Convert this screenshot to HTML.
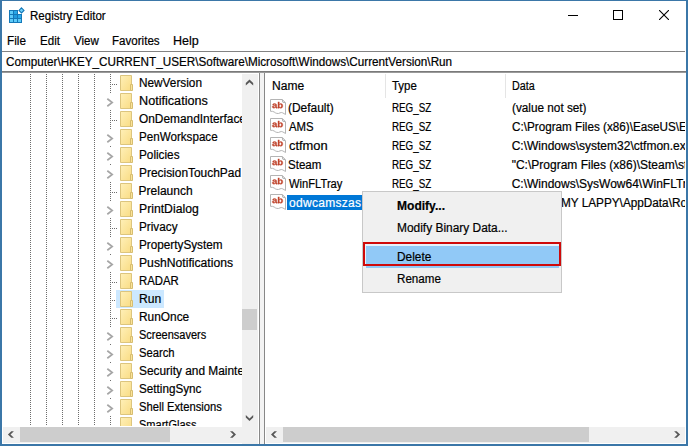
<!DOCTYPE html><html><head><meta charset="utf-8"><style>
*{margin:0;padding:0;box-sizing:border-box}
body{width:688px;height:446px;overflow:hidden;background:#fff;font-family:"Liberation Sans",sans-serif;font-size:12px;line-height:14px;color:#000;position:relative}
.a{position:absolute;white-space:nowrap;transform-origin:0 0;-webkit-text-stroke:0.2px currentColor}
.bl{position:absolute;background:#3b77a8}
.dv{position:absolute;width:1px;background-image:linear-gradient(#6d6d6d 50%,transparent 50%);background-size:1px 2px}
.dh{position:absolute;height:1px;background-image:linear-gradient(90deg,#6d6d6d 50%,transparent 50%);background-size:2px 1px}
</style></head><body>

<div class="bl" style="left:0;top:0;width:688px;height:1px"></div>
<div class="bl" style="left:0;top:0;width:2px;height:446px"></div>
<div class="bl" style="left:686px;top:0;width:2px;height:446px"></div>
<div class="bl" style="left:0;top:444px;width:688px;height:2px"></div>
<svg class="a" style="left:8px;top:6px" width="18" height="18" viewBox="0 0 18 18"><path d="M1 4H10V8H14V17H1Z" fill="#1478b8"/><rect x="2" y="5" width="3" height="3" fill="#5ccaf8"/><rect x="6" y="5" width="3" height="3" fill="#27a6e6"/><rect x="2" y="9" width="3" height="3" fill="#5ccaf8"/><rect x="6" y="9" width="3" height="3" fill="#1f9ade"/><rect x="10" y="9" width="3" height="3" fill="#2aa8e8"/><rect x="2" y="13" width="3" height="3" fill="#5ccaf8"/><rect x="6" y="13" width="3" height="3" fill="#5ccaf8"/><rect x="10" y="13" width="3" height="3" fill="#5ccaf8"/><path d="M13.5 1.9L16 4.4L13.5 6.9L11 4.4Z" fill="#6fd0f8" stroke="#1478b8" stroke-width="1.1"/></svg>
<div class="a" style="left:29.94px;top:9px;transform:scaleX(0.9615);">Registry Editor</div>
<div class="a" style="left:568px;top:15px;width:10px;height:1px;background:#000"></div>
<div class="a" style="left:613px;top:10px;width:10px;height:10px;border:1px solid #000"></div>
<svg class="a" style="left:659px;top:10px" width="10" height="10"><path d="M0 0L10 10M10 0L0 10" stroke="#000" stroke-width="1.1"/></svg>
<div class="a" style="left:7.42px;top:34px;transform:scaleX(0.9778);">File</div>
<div class="a" style="left:39.53px;top:34px;transform:scaleX(0.9650);">Edit</div>
<div class="a" style="left:74.00px;top:34px;transform:scaleX(0.9615);">View</div>
<div class="a" style="left:112.44px;top:34px;transform:scaleX(0.9646);">Favorites</div>
<div class="a" style="left:173.46px;top:34px;transform:scaleX(1.0435);">Help</div>
<div class="a" style="left:2px;top:51px;width:683px;height:1px;background:#828282"></div>
<div class="a" style="left:5.60px;top:55px;transform:scaleX(0.9751);">Computer\HKEY_CURRENT_USER\Software\Microsoft\Windows\CurrentVersion\Run</div>
<div class="a" style="left:2px;top:71px;width:684px;height:1px;background:#7a7a7a"></div>
<div class="a" style="left:2px;top:72px;width:684px;height:1px;background:#9a9a9a"></div>
<div class="a" style="left:0;top:73px;width:242px;height:353px;overflow:hidden">
<div class="dv" style="left:30px;top:1px;height:360px"></div>
<div class="dv" style="left:46px;top:1px;height:360px"></div>
<div class="dv" style="left:62px;top:1px;height:360px"></div>
<div class="dv" style="left:78px;top:1px;height:360px"></div>
<div class="dv" style="left:94px;top:1px;height:360px"></div>
<div class="dv" style="left:110px;top:1px;height:360px"></div>
<div class="dh" style="left:112px;top:11px;width:6px"></div>
<div class="a" style="left:120px;top:2px;width:14px;height:16px"><svg width="14" height="16" viewBox="0 0 14 16"><defs><linearGradient id="fg" x1="0" y1="0" x2="1" y2="1"><stop offset="0" stop-color="#fff0b8"/><stop offset="1" stop-color="#f9dc84"/></linearGradient></defs><path d="M0.5 0.5H11.5V15.5H0.5Z" fill="url(#fg)" stroke="#dcc57e"/><path d="M10.5 9.5H12.5V15.5H10.5Z" fill="#fbe39a" stroke="#d6bd70"/></svg></div>
<div class="a" style="left:138.62px;top:3px;transform:scaleX(0.9839);">NewVersion</div>
<div class="a" style="left:104px;top:20px;width:12px;height:16px;background:#fff"></div>
<svg class="a" style="left:106px;top:25px" width="9" height="11"><path d="M1.3 0.8L6.2 4.5L1.3 8.2" fill="none" stroke="#a6a6a6" stroke-width="1.7"/></svg>
<div class="a" style="left:120px;top:20px;width:14px;height:16px"><svg width="14" height="16" viewBox="0 0 14 16"><defs><linearGradient id="fg" x1="0" y1="0" x2="1" y2="1"><stop offset="0" stop-color="#fff0b8"/><stop offset="1" stop-color="#f9dc84"/></linearGradient></defs><path d="M0.5 0.5H11.5V15.5H0.5Z" fill="url(#fg)" stroke="#dcc57e"/><path d="M10.5 9.5H12.5V15.5H10.5Z" fill="#fbe39a" stroke="#d6bd70"/></svg></div>
<div class="a" style="left:138.55px;top:21px;transform:scaleX(1.0531);">Notifications</div>
<div class="dh" style="left:112px;top:47px;width:6px"></div>
<div class="a" style="left:120px;top:38px;width:14px;height:16px"><svg width="14" height="16" viewBox="0 0 14 16"><defs><linearGradient id="fg" x1="0" y1="0" x2="1" y2="1"><stop offset="0" stop-color="#fff0b8"/><stop offset="1" stop-color="#f9dc84"/></linearGradient></defs><path d="M0.5 0.5H11.5V15.5H0.5Z" fill="url(#fg)" stroke="#dcc57e"/><path d="M10.5 9.5H12.5V15.5H10.5Z" fill="#fbe39a" stroke="#d6bd70"/></svg></div>
<div class="a" style="left:138.60px;top:39px;transform:scaleX(0.9900);">OnDemandInterfaces</div>
<div class="a" style="left:104px;top:56px;width:12px;height:16px;background:#fff"></div>
<svg class="a" style="left:106px;top:61px" width="9" height="11"><path d="M1.3 0.8L6.2 4.5L1.3 8.2" fill="none" stroke="#a6a6a6" stroke-width="1.7"/></svg>
<div class="a" style="left:120px;top:56px;width:14px;height:16px"><svg width="14" height="16" viewBox="0 0 14 16"><defs><linearGradient id="fg" x1="0" y1="0" x2="1" y2="1"><stop offset="0" stop-color="#fff0b8"/><stop offset="1" stop-color="#f9dc84"/></linearGradient></defs><path d="M0.5 0.5H11.5V15.5H0.5Z" fill="url(#fg)" stroke="#dcc57e"/><path d="M10.5 9.5H12.5V15.5H10.5Z" fill="#fbe39a" stroke="#d6bd70"/></svg></div>
<div class="a" style="left:138.63px;top:57px;transform:scaleX(0.9688);">PenWorkspace</div>
<div class="a" style="left:104px;top:74px;width:12px;height:16px;background:#fff"></div>
<svg class="a" style="left:106px;top:79px" width="9" height="11"><path d="M1.3 0.8L6.2 4.5L1.3 8.2" fill="none" stroke="#a6a6a6" stroke-width="1.7"/></svg>
<div class="a" style="left:120px;top:74px;width:14px;height:16px"><svg width="14" height="16" viewBox="0 0 14 16"><defs><linearGradient id="fg" x1="0" y1="0" x2="1" y2="1"><stop offset="0" stop-color="#fff0b8"/><stop offset="1" stop-color="#f9dc84"/></linearGradient></defs><path d="M0.5 0.5H11.5V15.5H0.5Z" fill="url(#fg)" stroke="#dcc57e"/><path d="M10.5 9.5H12.5V15.5H10.5Z" fill="#fbe39a" stroke="#d6bd70"/></svg></div>
<div class="a" style="left:138.62px;top:75px;transform:scaleX(0.9800);">Policies</div>
<div class="a" style="left:104px;top:92px;width:12px;height:16px;background:#fff"></div>
<svg class="a" style="left:106px;top:97px" width="9" height="11"><path d="M1.3 0.8L6.2 4.5L1.3 8.2" fill="none" stroke="#a6a6a6" stroke-width="1.7"/></svg>
<div class="a" style="left:120px;top:92px;width:14px;height:16px"><svg width="14" height="16" viewBox="0 0 14 16"><defs><linearGradient id="fg" x1="0" y1="0" x2="1" y2="1"><stop offset="0" stop-color="#fff0b8"/><stop offset="1" stop-color="#f9dc84"/></linearGradient></defs><path d="M0.5 0.5H11.5V15.5H0.5Z" fill="url(#fg)" stroke="#dcc57e"/><path d="M10.5 9.5H12.5V15.5H10.5Z" fill="#fbe39a" stroke="#d6bd70"/></svg></div>
<div class="a" style="left:138.61px;top:93px;transform:scaleX(0.9931);">PrecisionTouchPad</div>
<div class="dh" style="left:112px;top:119px;width:6px"></div>
<div class="a" style="left:120px;top:110px;width:14px;height:16px"><svg width="14" height="16" viewBox="0 0 14 16"><defs><linearGradient id="fg" x1="0" y1="0" x2="1" y2="1"><stop offset="0" stop-color="#fff0b8"/><stop offset="1" stop-color="#f9dc84"/></linearGradient></defs><path d="M0.5 0.5H11.5V15.5H0.5Z" fill="url(#fg)" stroke="#dcc57e"/><path d="M10.5 9.5H12.5V15.5H10.5Z" fill="#fbe39a" stroke="#d6bd70"/></svg></div>
<div class="a" style="left:138.60px;top:111px;">Prelaunch</div>
<div class="a" style="left:104px;top:128px;width:12px;height:16px;background:#fff"></div>
<svg class="a" style="left:106px;top:133px" width="9" height="11"><path d="M1.3 0.8L6.2 4.5L1.3 8.2" fill="none" stroke="#a6a6a6" stroke-width="1.7"/></svg>
<div class="a" style="left:120px;top:128px;width:14px;height:16px"><svg width="14" height="16" viewBox="0 0 14 16"><defs><linearGradient id="fg" x1="0" y1="0" x2="1" y2="1"><stop offset="0" stop-color="#fff0b8"/><stop offset="1" stop-color="#f9dc84"/></linearGradient></defs><path d="M0.5 0.5H11.5V15.5H0.5Z" fill="url(#fg)" stroke="#dcc57e"/><path d="M10.5 9.5H12.5V15.5H10.5Z" fill="#fbe39a" stroke="#d6bd70"/></svg></div>
<div class="a" style="left:138.58px;top:129px;transform:scaleX(1.0175);">PrintDialog</div>
<div class="dh" style="left:112px;top:155px;width:6px"></div>
<div class="a" style="left:120px;top:146px;width:14px;height:16px"><svg width="14" height="16" viewBox="0 0 14 16"><defs><linearGradient id="fg" x1="0" y1="0" x2="1" y2="1"><stop offset="0" stop-color="#fff0b8"/><stop offset="1" stop-color="#f9dc84"/></linearGradient></defs><path d="M0.5 0.5H11.5V15.5H0.5Z" fill="url(#fg)" stroke="#dcc57e"/><path d="M10.5 9.5H12.5V15.5H10.5Z" fill="#fbe39a" stroke="#d6bd70"/></svg></div>
<div class="a" style="left:138.62px;top:147px;transform:scaleX(0.9789);">Privacy</div>
<div class="a" style="left:104px;top:164px;width:12px;height:16px;background:#fff"></div>
<svg class="a" style="left:106px;top:169px" width="9" height="11"><path d="M1.3 0.8L6.2 4.5L1.3 8.2" fill="none" stroke="#a6a6a6" stroke-width="1.7"/></svg>
<div class="a" style="left:120px;top:164px;width:14px;height:16px"><svg width="14" height="16" viewBox="0 0 14 16"><defs><linearGradient id="fg" x1="0" y1="0" x2="1" y2="1"><stop offset="0" stop-color="#fff0b8"/><stop offset="1" stop-color="#f9dc84"/></linearGradient></defs><path d="M0.5 0.5H11.5V15.5H0.5Z" fill="url(#fg)" stroke="#dcc57e"/><path d="M10.5 9.5H12.5V15.5H10.5Z" fill="#fbe39a" stroke="#d6bd70"/></svg></div>
<div class="a" style="left:138.62px;top:165px;transform:scaleX(0.9786);">PropertySystem</div>
<div class="a" style="left:104px;top:182px;width:12px;height:16px;background:#fff"></div>
<svg class="a" style="left:106px;top:187px" width="9" height="11"><path d="M1.3 0.8L6.2 4.5L1.3 8.2" fill="none" stroke="#a6a6a6" stroke-width="1.7"/></svg>
<div class="a" style="left:120px;top:182px;width:14px;height:16px"><svg width="14" height="16" viewBox="0 0 14 16"><defs><linearGradient id="fg" x1="0" y1="0" x2="1" y2="1"><stop offset="0" stop-color="#fff0b8"/><stop offset="1" stop-color="#f9dc84"/></linearGradient></defs><path d="M0.5 0.5H11.5V15.5H0.5Z" fill="url(#fg)" stroke="#dcc57e"/><path d="M10.5 9.5H12.5V15.5H10.5Z" fill="#fbe39a" stroke="#d6bd70"/></svg></div>
<div class="a" style="left:138.59px;top:183px;transform:scaleX(1.0141);">PushNotifications</div>
<div class="dh" style="left:112px;top:209px;width:6px"></div>
<div class="a" style="left:120px;top:200px;width:14px;height:16px"><svg width="14" height="16" viewBox="0 0 14 16"><defs><linearGradient id="fg" x1="0" y1="0" x2="1" y2="1"><stop offset="0" stop-color="#fff0b8"/><stop offset="1" stop-color="#f9dc84"/></linearGradient></defs><path d="M0.5 0.5H11.5V15.5H0.5Z" fill="url(#fg)" stroke="#dcc57e"/><path d="M10.5 9.5H12.5V15.5H10.5Z" fill="#fbe39a" stroke="#d6bd70"/></svg></div>
<div class="a" style="left:138.66px;top:201px;transform:scaleX(0.9450);">RADAR</div>
<div class="dh" style="left:112px;top:227px;width:6px"></div>
<div class="a" style="left:116px;top:217px;width:48px;height:18px;background:#cce8ff"></div>
<div class="a" style="left:120px;top:218px;width:14px;height:16px"><svg width="14" height="16" viewBox="0 0 14 16"><defs><linearGradient id="fg" x1="0" y1="0" x2="1" y2="1"><stop offset="0" stop-color="#fff0b8"/><stop offset="1" stop-color="#f9dc84"/></linearGradient></defs><path d="M0.5 0.5H11.5V15.5H0.5Z" fill="url(#fg)" stroke="#dcc57e"/><path d="M10.5 9.5H12.5V15.5H10.5Z" fill="#fbe39a" stroke="#d6bd70"/></svg></div>
<div class="a" style="left:138.59px;top:219px;transform:scaleX(1.0100);">Run</div>
<div class="dh" style="left:112px;top:245px;width:6px"></div>
<div class="a" style="left:120px;top:236px;width:14px;height:16px"><svg width="14" height="16" viewBox="0 0 14 16"><defs><linearGradient id="fg" x1="0" y1="0" x2="1" y2="1"><stop offset="0" stop-color="#fff0b8"/><stop offset="1" stop-color="#f9dc84"/></linearGradient></defs><path d="M0.5 0.5H11.5V15.5H0.5Z" fill="url(#fg)" stroke="#dcc57e"/><path d="M10.5 9.5H12.5V15.5H10.5Z" fill="#fbe39a" stroke="#d6bd70"/></svg></div>
<div class="a" style="left:138.61px;top:237px;transform:scaleX(0.9898);">RunOnce</div>
<div class="a" style="left:104px;top:254px;width:12px;height:16px;background:#fff"></div>
<svg class="a" style="left:106px;top:259px" width="9" height="11"><path d="M1.3 0.8L6.2 4.5L1.3 8.2" fill="none" stroke="#a6a6a6" stroke-width="1.7"/></svg>
<div class="a" style="left:120px;top:254px;width:14px;height:16px"><svg width="14" height="16" viewBox="0 0 14 16"><defs><linearGradient id="fg" x1="0" y1="0" x2="1" y2="1"><stop offset="0" stop-color="#fff0b8"/><stop offset="1" stop-color="#f9dc84"/></linearGradient></defs><path d="M0.5 0.5H11.5V15.5H0.5Z" fill="url(#fg)" stroke="#dcc57e"/><path d="M10.5 9.5H12.5V15.5H10.5Z" fill="#fbe39a" stroke="#d6bd70"/></svg></div>
<div class="a" style="left:138.68px;top:255px;transform:scaleX(0.9167);">Screensavers</div>
<div class="a" style="left:104px;top:272px;width:12px;height:16px;background:#fff"></div>
<svg class="a" style="left:106px;top:277px" width="9" height="11"><path d="M1.3 0.8L6.2 4.5L1.3 8.2" fill="none" stroke="#a6a6a6" stroke-width="1.7"/></svg>
<div class="a" style="left:120px;top:272px;width:14px;height:16px"><svg width="14" height="16" viewBox="0 0 14 16"><defs><linearGradient id="fg" x1="0" y1="0" x2="1" y2="1"><stop offset="0" stop-color="#fff0b8"/><stop offset="1" stop-color="#f9dc84"/></linearGradient></defs><path d="M0.5 0.5H11.5V15.5H0.5Z" fill="url(#fg)" stroke="#dcc57e"/><path d="M10.5 9.5H12.5V15.5H10.5Z" fill="#fbe39a" stroke="#d6bd70"/></svg></div>
<div class="a" style="left:138.66px;top:273px;transform:scaleX(0.9361);">Search</div>
<div class="a" style="left:104px;top:290px;width:12px;height:16px;background:#fff"></div>
<svg class="a" style="left:106px;top:295px" width="9" height="11"><path d="M1.3 0.8L6.2 4.5L1.3 8.2" fill="none" stroke="#a6a6a6" stroke-width="1.7"/></svg>
<div class="a" style="left:120px;top:290px;width:14px;height:16px"><svg width="14" height="16" viewBox="0 0 14 16"><defs><linearGradient id="fg" x1="0" y1="0" x2="1" y2="1"><stop offset="0" stop-color="#fff0b8"/><stop offset="1" stop-color="#f9dc84"/></linearGradient></defs><path d="M0.5 0.5H11.5V15.5H0.5Z" fill="url(#fg)" stroke="#dcc57e"/><path d="M10.5 9.5H12.5V15.5H10.5Z" fill="#fbe39a" stroke="#d6bd70"/></svg></div>
<div class="a" style="left:138.60px;top:291px;transform:scaleX(0.9900);">Security and Maintenance</div>
<div class="a" style="left:104px;top:308px;width:12px;height:16px;background:#fff"></div>
<svg class="a" style="left:106px;top:313px" width="9" height="11"><path d="M1.3 0.8L6.2 4.5L1.3 8.2" fill="none" stroke="#a6a6a6" stroke-width="1.7"/></svg>
<div class="a" style="left:120px;top:308px;width:14px;height:16px"><svg width="14" height="16" viewBox="0 0 14 16"><defs><linearGradient id="fg" x1="0" y1="0" x2="1" y2="1"><stop offset="0" stop-color="#fff0b8"/><stop offset="1" stop-color="#f9dc84"/></linearGradient></defs><path d="M0.5 0.5H11.5V15.5H0.5Z" fill="url(#fg)" stroke="#dcc57e"/><path d="M10.5 9.5H12.5V15.5H10.5Z" fill="#fbe39a" stroke="#d6bd70"/></svg></div>
<div class="a" style="left:138.63px;top:309px;transform:scaleX(0.9746);">SettingSync</div>
<div class="a" style="left:104px;top:326px;width:12px;height:16px;background:#fff"></div>
<svg class="a" style="left:106px;top:331px" width="9" height="11"><path d="M1.3 0.8L6.2 4.5L1.3 8.2" fill="none" stroke="#a6a6a6" stroke-width="1.7"/></svg>
<div class="a" style="left:120px;top:326px;width:14px;height:16px"><svg width="14" height="16" viewBox="0 0 14 16"><defs><linearGradient id="fg" x1="0" y1="0" x2="1" y2="1"><stop offset="0" stop-color="#fff0b8"/><stop offset="1" stop-color="#f9dc84"/></linearGradient></defs><path d="M0.5 0.5H11.5V15.5H0.5Z" fill="url(#fg)" stroke="#dcc57e"/><path d="M10.5 9.5H12.5V15.5H10.5Z" fill="#fbe39a" stroke="#d6bd70"/></svg></div>
<div class="a" style="left:138.67px;top:327px;transform:scaleX(0.9341);">Shell Extensions</div>
<div class="dh" style="left:112px;top:353px;width:6px"></div>
<div class="a" style="left:120px;top:344px;width:14px;height:16px"><svg width="14" height="16" viewBox="0 0 14 16"><defs><linearGradient id="fg" x1="0" y1="0" x2="1" y2="1"><stop offset="0" stop-color="#fff0b8"/><stop offset="1" stop-color="#f9dc84"/></linearGradient></defs><path d="M0.5 0.5H11.5V15.5H0.5Z" fill="url(#fg)" stroke="#dcc57e"/><path d="M10.5 9.5H12.5V15.5H10.5Z" fill="#fbe39a" stroke="#d6bd70"/></svg></div>
<div class="a" style="left:138.68px;top:345px;transform:scaleX(0.9194);">SmartGlass</div>
</div>
<div class="a" style="left:242px;top:74px;width:16px;height:370px;background:#f0f0f0"></div>
<div class="a" style="left:242px;top:309px;width:15px;height:21px;background:#cdcdcd"></div>
<div class="a" style="left:3px;top:427px;width:239px;height:16px;background:#f0f0f0"></div>
<div class="a" style="left:20px;top:427px;width:150px;height:15px;background:#cdcdcd"></div>
<div class="a" style="left:258px;top:73px;width:1px;height:354px;background:#fff"></div>
<div class="a" style="left:259px;top:73px;width:1px;height:371px;background:#888"></div>
<div class="a" style="left:260px;top:73px;width:4px;height:371px;background:#f3f3f3"></div>
<div class="a" style="left:264px;top:73px;width:1px;height:371px;background:#888"></div>
<div class="a" style="left:265px;top:73px;width:421px;height:354px;overflow:hidden">
</div>
<div class="a" style="left:385px;top:74px;width:1px;height:24px;background:#e5e5e5"></div>
<div class="a" style="left:505px;top:74px;width:1px;height:24px;background:#e5e5e5"></div>
<div class="a" style="left:271.80px;top:79px;transform:scaleX(1.0032);">Name</div>
<div class="a" style="left:392.40px;top:79px;transform:scaleX(0.9538);">Type</div>
<div class="a" style="left:511.90px;top:79px;transform:scaleX(0.8960);">Data</div>
<div class="a" style="left:270px;top:99px;width:16px;height:16px"><svg width="16" height="16" viewBox="0 0 16 16"><path d="M0.5 0.5H12.3L15.5 3.7V15.5Q14 14.6 12.8 13.9Q11.2 13.1 10 13.9Q8.6 14.8 6.8 14.4Q5.2 14 4.2 13Q2.8 12.1 0.5 12.3Z" fill="#fff" stroke="#b4b4b4"/><path d="M12.3 0.8L12.8 3.2L15.2 3.7" fill="none" stroke="#9a9a9a" stroke-width="0.8"/><path transform="translate(2.0 9.15) scale(0.00467 0.0042)" d="M393 20Q236 20 148.0 -65.5Q60 -151 60 -306Q60 -474 169.5 -562.0Q279 -650 487 -652L720 -656V-711Q720 -817 683.0 -868.5Q646 -920 562 -920Q484 -920 447.5 -884.5Q411 -849 402 -767L109 -781Q136 -939 253.5 -1020.5Q371 -1102 574 -1102Q779 -1102 890.0 -1001.0Q1001 -900 1001 -714V-320Q1001 -229 1021.5 -194.5Q1042 -160 1090 -160Q1122 -160 1152 -166V-14Q1127 -8 1107.0 -3.0Q1087 2 1067.0 5.0Q1047 8 1024.5 10.0Q1002 12 972 12Q866 12 815.5 -40.0Q765 -92 755 -193H749Q631 20 393 20ZM720 -501 576 -499Q478 -495 437.0 -477.5Q396 -460 374.5 -424.0Q353 -388 353 -328Q353 -251 388.5 -213.5Q424 -176 483 -176Q549 -176 603.5 -212.0Q658 -248 689.0 -311.5Q720 -375 720 -446Z M2306 -545Q2306 -277 2198.5 -128.5Q2091 20 1891 20Q1776 20 1692.0 -30.0Q1608 -80 1563 -174H1561Q1561 -139 1556.5 -78.0Q1552 -17 1547 0H1274Q1282 -93 1282 -247V-1484H1563V-1070L1559 -894H1563Q1658 -1102 1909 -1102Q2101 -1102 2203.5 -956.5Q2306 -811 2306 -545ZM2013 -545Q2013 -729 1959.0 -818.0Q1905 -907 1792 -907Q1678 -907 1618.5 -811.5Q1559 -716 1559 -536Q1559 -364 1617.5 -268.0Q1676 -172 1790 -172Q2013 -172 2013 -545Z" fill="#c0432b" stroke="#c0432b" stroke-width="0.35" vector-effect="non-scaling-stroke"/></svg></div>
<div class="a" style="left:287.60px;top:101px;transform:scaleX(0.9956);">(Default)</div>
<div class="a" style="left:391.78px;top:101px;transform:scaleX(0.8170);">REG_SZ</div>
<div class="a" style="left:265px;top:99px;width:420px;height:19px;overflow:hidden"><div class="a" style="left:246.72px;top:2px;transform:scaleX(0.9800);">(value not set)</div></div>
<div class="a" style="left:270px;top:118px;width:16px;height:16px"><svg width="16" height="16" viewBox="0 0 16 16"><path d="M0.5 0.5H12.3L15.5 3.7V15.5Q14 14.6 12.8 13.9Q11.2 13.1 10 13.9Q8.6 14.8 6.8 14.4Q5.2 14 4.2 13Q2.8 12.1 0.5 12.3Z" fill="#fff" stroke="#b4b4b4"/><path d="M12.3 0.8L12.8 3.2L15.2 3.7" fill="none" stroke="#9a9a9a" stroke-width="0.8"/><path transform="translate(2.0 9.15) scale(0.00467 0.0042)" d="M393 20Q236 20 148.0 -65.5Q60 -151 60 -306Q60 -474 169.5 -562.0Q279 -650 487 -652L720 -656V-711Q720 -817 683.0 -868.5Q646 -920 562 -920Q484 -920 447.5 -884.5Q411 -849 402 -767L109 -781Q136 -939 253.5 -1020.5Q371 -1102 574 -1102Q779 -1102 890.0 -1001.0Q1001 -900 1001 -714V-320Q1001 -229 1021.5 -194.5Q1042 -160 1090 -160Q1122 -160 1152 -166V-14Q1127 -8 1107.0 -3.0Q1087 2 1067.0 5.0Q1047 8 1024.5 10.0Q1002 12 972 12Q866 12 815.5 -40.0Q765 -92 755 -193H749Q631 20 393 20ZM720 -501 576 -499Q478 -495 437.0 -477.5Q396 -460 374.5 -424.0Q353 -388 353 -328Q353 -251 388.5 -213.5Q424 -176 483 -176Q549 -176 603.5 -212.0Q658 -248 689.0 -311.5Q720 -375 720 -446Z M2306 -545Q2306 -277 2198.5 -128.5Q2091 20 1891 20Q1776 20 1692.0 -30.0Q1608 -80 1563 -174H1561Q1561 -139 1556.5 -78.0Q1552 -17 1547 0H1274Q1282 -93 1282 -247V-1484H1563V-1070L1559 -894H1563Q1658 -1102 1909 -1102Q2101 -1102 2203.5 -956.5Q2306 -811 2306 -545ZM2013 -545Q2013 -729 1959.0 -818.0Q1905 -907 1792 -907Q1678 -907 1618.5 -811.5Q1559 -716 1559 -536Q1559 -364 1617.5 -268.0Q1676 -172 1790 -172Q2013 -172 2013 -545Z" fill="#c0432b" stroke="#c0432b" stroke-width="0.35" vector-effect="non-scaling-stroke"/></svg></div>
<div class="a" style="left:288.60px;top:120px;transform:scaleX(0.9462);">AMS</div>
<div class="a" style="left:391.78px;top:120px;transform:scaleX(0.8170);">REG_SZ</div>
<div class="a" style="left:265px;top:118px;width:420px;height:19px;overflow:hidden"><div class="a" style="left:246.70px;top:2px;transform:scaleX(0.9750);">C:\Program Files (x86)\EaseUS\EaseUS Todo Backup</div></div>
<div class="a" style="left:270px;top:137px;width:16px;height:16px"><svg width="16" height="16" viewBox="0 0 16 16"><path d="M0.5 0.5H12.3L15.5 3.7V15.5Q14 14.6 12.8 13.9Q11.2 13.1 10 13.9Q8.6 14.8 6.8 14.4Q5.2 14 4.2 13Q2.8 12.1 0.5 12.3Z" fill="#fff" stroke="#b4b4b4"/><path d="M12.3 0.8L12.8 3.2L15.2 3.7" fill="none" stroke="#9a9a9a" stroke-width="0.8"/><path transform="translate(2.0 9.15) scale(0.00467 0.0042)" d="M393 20Q236 20 148.0 -65.5Q60 -151 60 -306Q60 -474 169.5 -562.0Q279 -650 487 -652L720 -656V-711Q720 -817 683.0 -868.5Q646 -920 562 -920Q484 -920 447.5 -884.5Q411 -849 402 -767L109 -781Q136 -939 253.5 -1020.5Q371 -1102 574 -1102Q779 -1102 890.0 -1001.0Q1001 -900 1001 -714V-320Q1001 -229 1021.5 -194.5Q1042 -160 1090 -160Q1122 -160 1152 -166V-14Q1127 -8 1107.0 -3.0Q1087 2 1067.0 5.0Q1047 8 1024.5 10.0Q1002 12 972 12Q866 12 815.5 -40.0Q765 -92 755 -193H749Q631 20 393 20ZM720 -501 576 -499Q478 -495 437.0 -477.5Q396 -460 374.5 -424.0Q353 -388 353 -328Q353 -251 388.5 -213.5Q424 -176 483 -176Q549 -176 603.5 -212.0Q658 -248 689.0 -311.5Q720 -375 720 -446Z M2306 -545Q2306 -277 2198.5 -128.5Q2091 20 1891 20Q1776 20 1692.0 -30.0Q1608 -80 1563 -174H1561Q1561 -139 1556.5 -78.0Q1552 -17 1547 0H1274Q1282 -93 1282 -247V-1484H1563V-1070L1559 -894H1563Q1658 -1102 1909 -1102Q2101 -1102 2203.5 -956.5Q2306 -811 2306 -545ZM2013 -545Q2013 -729 1959.0 -818.0Q1905 -907 1792 -907Q1678 -907 1618.5 -811.5Q1559 -716 1559 -536Q1559 -364 1617.5 -268.0Q1676 -172 1790 -172Q2013 -172 2013 -545Z" fill="#c0432b" stroke="#c0432b" stroke-width="0.35" vector-effect="non-scaling-stroke"/></svg></div>
<div class="a" style="left:288.60px;top:139px;transform:scaleX(1.0743);">ctfmon</div>
<div class="a" style="left:391.78px;top:139px;transform:scaleX(0.8170);">REG_SZ</div>
<div class="a" style="left:265px;top:137px;width:420px;height:19px;overflow:hidden"><div class="a" style="left:246.70px;top:2px;">C:\Windows\system32\ctfmon.exe</div></div>
<div class="a" style="left:270px;top:156px;width:16px;height:16px"><svg width="16" height="16" viewBox="0 0 16 16"><path d="M0.5 0.5H12.3L15.5 3.7V15.5Q14 14.6 12.8 13.9Q11.2 13.1 10 13.9Q8.6 14.8 6.8 14.4Q5.2 14 4.2 13Q2.8 12.1 0.5 12.3Z" fill="#fff" stroke="#b4b4b4"/><path d="M12.3 0.8L12.8 3.2L15.2 3.7" fill="none" stroke="#9a9a9a" stroke-width="0.8"/><path transform="translate(2.0 9.15) scale(0.00467 0.0042)" d="M393 20Q236 20 148.0 -65.5Q60 -151 60 -306Q60 -474 169.5 -562.0Q279 -650 487 -652L720 -656V-711Q720 -817 683.0 -868.5Q646 -920 562 -920Q484 -920 447.5 -884.5Q411 -849 402 -767L109 -781Q136 -939 253.5 -1020.5Q371 -1102 574 -1102Q779 -1102 890.0 -1001.0Q1001 -900 1001 -714V-320Q1001 -229 1021.5 -194.5Q1042 -160 1090 -160Q1122 -160 1152 -166V-14Q1127 -8 1107.0 -3.0Q1087 2 1067.0 5.0Q1047 8 1024.5 10.0Q1002 12 972 12Q866 12 815.5 -40.0Q765 -92 755 -193H749Q631 20 393 20ZM720 -501 576 -499Q478 -495 437.0 -477.5Q396 -460 374.5 -424.0Q353 -388 353 -328Q353 -251 388.5 -213.5Q424 -176 483 -176Q549 -176 603.5 -212.0Q658 -248 689.0 -311.5Q720 -375 720 -446Z M2306 -545Q2306 -277 2198.5 -128.5Q2091 20 1891 20Q1776 20 1692.0 -30.0Q1608 -80 1563 -174H1561Q1561 -139 1556.5 -78.0Q1552 -17 1547 0H1274Q1282 -93 1282 -247V-1484H1563V-1070L1559 -894H1563Q1658 -1102 1909 -1102Q2101 -1102 2203.5 -956.5Q2306 -811 2306 -545ZM2013 -545Q2013 -729 1959.0 -818.0Q1905 -907 1792 -907Q1678 -907 1618.5 -811.5Q1559 -716 1559 -536Q1559 -364 1617.5 -268.0Q1676 -172 1790 -172Q2013 -172 2013 -545Z" fill="#c0432b" stroke="#c0432b" stroke-width="0.35" vector-effect="non-scaling-stroke"/></svg></div>
<div class="a" style="left:287.64px;top:158px;transform:scaleX(0.9636);">Steam</div>
<div class="a" style="left:391.78px;top:158px;transform:scaleX(0.8170);">REG_SZ</div>
<div class="a" style="left:265px;top:156px;width:420px;height:19px;overflow:hidden"><div class="a" style="left:246.70px;top:2px;">&quot;C:\Program Files (x86)\Steam\steam.exe&quot; -silent</div></div>
<div class="a" style="left:270px;top:175px;width:16px;height:16px"><svg width="16" height="16" viewBox="0 0 16 16"><path d="M0.5 0.5H12.3L15.5 3.7V15.5Q14 14.6 12.8 13.9Q11.2 13.1 10 13.9Q8.6 14.8 6.8 14.4Q5.2 14 4.2 13Q2.8 12.1 0.5 12.3Z" fill="#fff" stroke="#b4b4b4"/><path d="M12.3 0.8L12.8 3.2L15.2 3.7" fill="none" stroke="#9a9a9a" stroke-width="0.8"/><path transform="translate(2.0 9.15) scale(0.00467 0.0042)" d="M393 20Q236 20 148.0 -65.5Q60 -151 60 -306Q60 -474 169.5 -562.0Q279 -650 487 -652L720 -656V-711Q720 -817 683.0 -868.5Q646 -920 562 -920Q484 -920 447.5 -884.5Q411 -849 402 -767L109 -781Q136 -939 253.5 -1020.5Q371 -1102 574 -1102Q779 -1102 890.0 -1001.0Q1001 -900 1001 -714V-320Q1001 -229 1021.5 -194.5Q1042 -160 1090 -160Q1122 -160 1152 -166V-14Q1127 -8 1107.0 -3.0Q1087 2 1067.0 5.0Q1047 8 1024.5 10.0Q1002 12 972 12Q866 12 815.5 -40.0Q765 -92 755 -193H749Q631 20 393 20ZM720 -501 576 -499Q478 -495 437.0 -477.5Q396 -460 374.5 -424.0Q353 -388 353 -328Q353 -251 388.5 -213.5Q424 -176 483 -176Q549 -176 603.5 -212.0Q658 -248 689.0 -311.5Q720 -375 720 -446Z M2306 -545Q2306 -277 2198.5 -128.5Q2091 20 1891 20Q1776 20 1692.0 -30.0Q1608 -80 1563 -174H1561Q1561 -139 1556.5 -78.0Q1552 -17 1547 0H1274Q1282 -93 1282 -247V-1484H1563V-1070L1559 -894H1563Q1658 -1102 1909 -1102Q2101 -1102 2203.5 -956.5Q2306 -811 2306 -545ZM2013 -545Q2013 -729 1959.0 -818.0Q1905 -907 1792 -907Q1678 -907 1618.5 -811.5Q1559 -716 1559 -536Q1559 -364 1617.5 -268.0Q1676 -172 1790 -172Q2013 -172 2013 -545Z" fill="#c0432b" stroke="#c0432b" stroke-width="0.35" vector-effect="non-scaling-stroke"/></svg></div>
<div class="a" style="left:288.60px;top:177px;transform:scaleX(0.9316);">WinFLTray</div>
<div class="a" style="left:391.78px;top:177px;transform:scaleX(0.8170);">REG_SZ</div>
<div class="a" style="left:265px;top:175px;width:420px;height:19px;overflow:hidden"><div class="a" style="left:246.70px;top:2px;">C:\Windows\SysWow64\WinFLTray.exe</div></div>
<div class="a" style="left:270px;top:194px;width:16px;height:16px"><svg width="16" height="16" viewBox="0 0 16 16"><path d="M0.5 0.5H12.3L15.5 3.7V15.5Q14 14.6 12.8 13.9Q11.2 13.1 10 13.9Q8.6 14.8 6.8 14.4Q5.2 14 4.2 13Q2.8 12.1 0.5 12.3Z" fill="#fff" stroke="#b4b4b4"/><path d="M12.3 0.8L12.8 3.2L15.2 3.7" fill="none" stroke="#9a9a9a" stroke-width="0.8"/><path transform="translate(2.0 9.15) scale(0.00467 0.0042)" d="M393 20Q236 20 148.0 -65.5Q60 -151 60 -306Q60 -474 169.5 -562.0Q279 -650 487 -652L720 -656V-711Q720 -817 683.0 -868.5Q646 -920 562 -920Q484 -920 447.5 -884.5Q411 -849 402 -767L109 -781Q136 -939 253.5 -1020.5Q371 -1102 574 -1102Q779 -1102 890.0 -1001.0Q1001 -900 1001 -714V-320Q1001 -229 1021.5 -194.5Q1042 -160 1090 -160Q1122 -160 1152 -166V-14Q1127 -8 1107.0 -3.0Q1087 2 1067.0 5.0Q1047 8 1024.5 10.0Q1002 12 972 12Q866 12 815.5 -40.0Q765 -92 755 -193H749Q631 20 393 20ZM720 -501 576 -499Q478 -495 437.0 -477.5Q396 -460 374.5 -424.0Q353 -388 353 -328Q353 -251 388.5 -213.5Q424 -176 483 -176Q549 -176 603.5 -212.0Q658 -248 689.0 -311.5Q720 -375 720 -446Z M2306 -545Q2306 -277 2198.5 -128.5Q2091 20 1891 20Q1776 20 1692.0 -30.0Q1608 -80 1563 -174H1561Q1561 -139 1556.5 -78.0Q1552 -17 1547 0H1274Q1282 -93 1282 -247V-1484H1563V-1070L1559 -894H1563Q1658 -1102 1909 -1102Q2101 -1102 2203.5 -956.5Q2306 -811 2306 -545ZM2013 -545Q2013 -729 1959.0 -818.0Q1905 -907 1792 -907Q1678 -907 1618.5 -811.5Q1559 -716 1559 -536Q1559 -364 1617.5 -268.0Q1676 -172 1790 -172Q2013 -172 2013 -545Z" fill="#c0432b" stroke="#c0432b" stroke-width="0.35" vector-effect="non-scaling-stroke"/></svg></div>
<div class="a" style="left:287px;top:195px;width:80px;height:15px;background:#0078d7"></div>
<div class="a" style="left:289.00px;top:196px;color:#fff;letter-spacing:0.3px">odwcamszas</div>
<div class="a" style="left:391.78px;top:196px;transform:scaleX(0.8170);">REG_SZ</div>
<div class="a" style="left:265px;top:194px;width:420px;height:19px;overflow:hidden"><div class="a" style="left:246.70px;top:2px;transform:scaleX(0.9800);">C:\Users\MY LAPPY\AppData\Roaming\odwcamszas.exe</div></div>
<div class="a" style="left:266px;top:427px;width:419px;height:16px;background:#f0f0f0"></div>
<div class="a" style="left:283px;top:427px;width:306px;height:15px;background:#cdcdcd"></div>
<svg class="a" style="left:0;top:0" width="688" height="446" viewBox="0 0 688 446"><g fill="#585858"><polygon points="13.9,431.2 11.3,431.2 7.9,434.5 11.3,437.8 13.9,437.8 10.5,434.5"/><polygon points="230,431.2 232.6,431.2 236,434.5 232.6,437.8 230,437.8 233.4,434.5"/><polygon points="277,431.2 274.4,431.2 271,434.5 274.4,437.8 277,437.8 273.6,434.5"/><polygon points="674.1,431.2 676.7,431.2 680.1,434.5 676.7,437.8 674.1,437.8 677.5,434.5"/><polygon points="245.8,415 245.8,417.6 249.5,421 253.2,417.6 253.2,415 249.5,418.4"/><polygon points="245.8,85.6 245.8,83 249.5,79.6 253.2,83 253.2,85.6 249.5,82.2"/></g></svg>
<div class="a" style="left:362px;top:191px;width:200px;height:102px;background:#f0f0f0;border:1px solid #c8c8c8"></div>
<div class="a" style="left:396.50px;top:199px;transform:scaleX(1.0043);font-weight:bold">Modify...</div>
<div class="a" style="left:396.51px;top:221px;transform:scaleX(0.9936);">Modify Binary Data...</div>
<div class="a" style="left:365px;top:244px;width:195px;height:24px;background:#e6f1fb"></div>
<div class="a" style="left:366px;top:246px;width:193px;height:22px;background:#91c9f7"></div>
<div class="a" style="left:363px;top:242px;width:198px;height:24px;border:2px solid #cf0a0a"></div>
<div class="a" style="left:396.51px;top:250px;transform:scaleX(0.9879);">Delete</div>
<div class="a" style="left:396.53px;top:272px;transform:scaleX(0.9682);">Rename</div>
</body></html>
